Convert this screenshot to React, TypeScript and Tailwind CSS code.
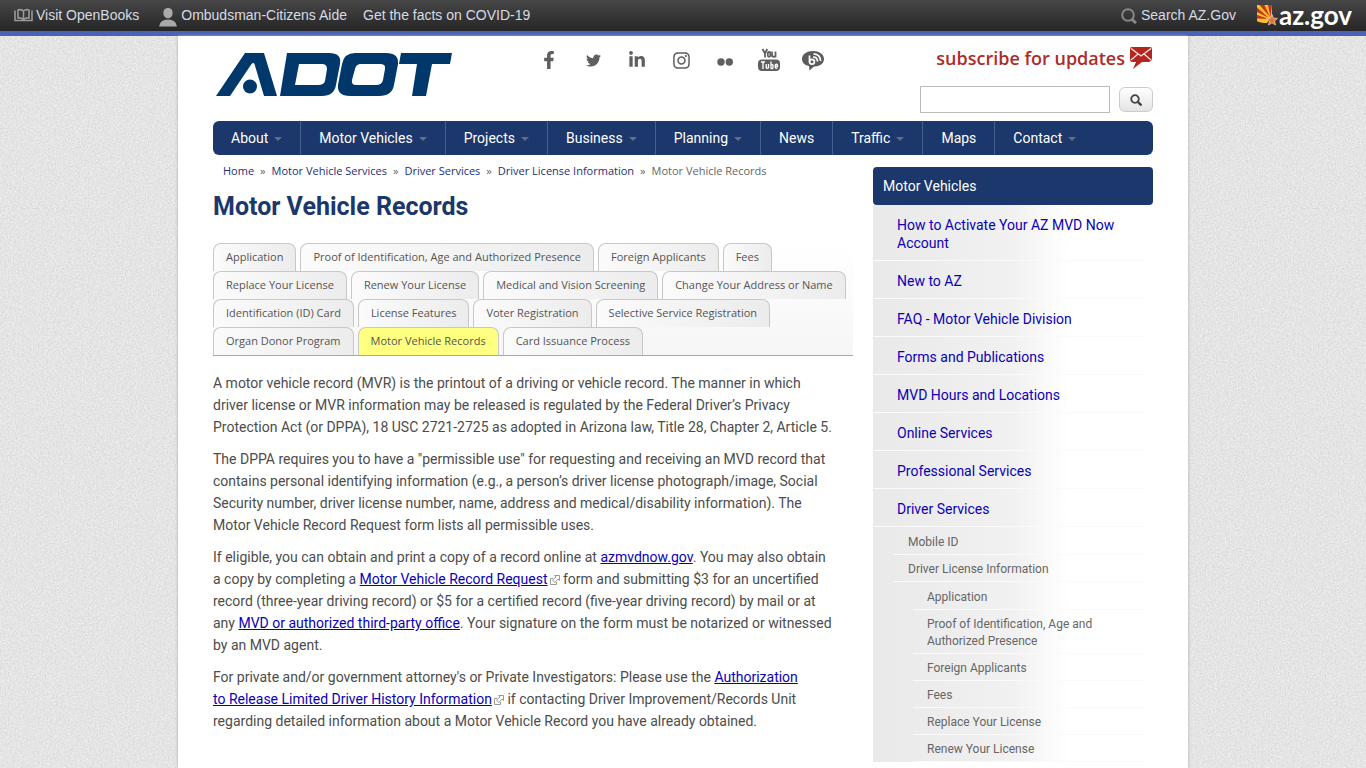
import type { ReactNode } from "react";
import { FaFacebookF, FaTwitter, FaLinkedinIn, FaInstagram } from "react-icons/fa";

const nav = [
    { label: "About", menu: true },
    { label: "Motor Vehicles", menu: true },
    { label: "Projects", menu: true },
    { label: "Business", menu: true },
    { label: "Planning", menu: true },
    { label: "News", menu: false },
    { label: "Traffic", menu: true },
    { label: "Maps", menu: false },
    { label: "Contact", menu: true },
];

const breadcrumbs = ["Home", "Motor Vehicle Services", "Driver Services", "Driver License Information"];

const tabRows = [
    ["Application", "Proof of Identification, Age and Authorized Presence", "Foreign Applicants", "Fees"],
    ["Replace Your License", "Renew Your License", "Medical and Vision Screening", "Change Your Address or Name"],
    ["Identification (ID) Card", "License Features", "Voter Registration", "Selective Service Registration"],
    ["Organ Donor Program", "Motor Vehicle Records", "Card Issuance Process"],
];

const sideLinks = [
    "How to Activate Your AZ MVD Now Account",
    "New to AZ",
    "FAQ - Motor Vehicle Division",
    "Forms and Publications",
    "MVD Hours and Locations",
    "Online Services",
    "Professional Services",
    "Driver Services",
];

const licenseLinks = [
    "Application",
    "Proof of Identification, Age and Authorized Presence",
    "Foreign Applicants",
    "Fees",
    "Replace Your License",
    "Renew Your License",
];

function PaperTexture() {
    return (
        <svg className="absolute inset-0 -z-10 h-full w-full" aria-hidden="true">
            <filter id="paper" colorInterpolationFilters="sRGB">
                <feTurbulence type="fractalNoise" baseFrequency="0.6" numOctaves="3" seed="4" />
                <feColorMatrix values="0.14 0 0 0 0.825  0.14 0 0 0 0.825  0.14 0 0 0 0.825  0 0 0 0 1" />
            </filter>
            <rect width="100%" height="100%" filter="url(#paper)" />
        </svg>
    );
}

function AzGovLogo() {
    return (
        <a href="#" className="flex items-center gap-px text-white" aria-label="az.gov">
            <svg viewBox="0 0 22 22" className="h-[22px] w-[22px]" aria-hidden="true">
                <path d="M1 1h15v10l-2 4-3 4Q4 19 1 17z" fill="#f8c02a" />
                <path d="M1 3.500V8l12 6zM3.500 1 14 13 8.500 1zM12 1l2.500 12L16 1zM1 11v3.500l12 .500z" fill="#c8321c" />
                <path
                    d="M16 10.500l1.500 3.600 4 .3-3 2.600 1 4-3.500-2.200L12.500 21l1-4-3-2.600 4-.3z"
                    fill="#e0763a"
                    stroke="#f3d9c8"
                    strokeWidth=".7"
                />
            </svg>
            <span className="font-['Lato'] text-[26px] leading-6 font-bold">az.gov</span>
        </a>
    );
}

function AdotLogo() {
    return (
        <svg viewBox="0 0 236 43" className="h-[43px] w-[236px]" role="img" aria-label="ADOT">
            <g fill="#00386b">
                <path d="M0 43 29 0h19l13 43H48L38.500 11q-1-2-3 0L14 43z" />
                <circle cx="34" cy="33.500" r="7" />
                <path
                    fillRule="evenodd"
                    d="M71 0h42q13 0 11 11l-4 21q-2 11-14 11H64zM83 11l-4 21h23q6 0 7-4l2-12q0-5-5-5z"
                />
                <path
                    fillRule="evenodd"
                    d="M139 0h31q13 0 12 11l-4 21q-2 11-15 11h-29q-13 0-12-11l4-21q2-11 13-11zM145 11q-5 0-6 5l-3 11q-1 5 4 5h20q6 0 7-5l2-11q1-5-5-5z"
                />
                <path d="M185 0h51l-2 11h-18l-6 32h-14l5-32h-18z" />
            </g>
        </svg>
    );
}

function YoutubeIcon() {
    return (
        <svg viewBox="0 0 24 24" className="h-6 w-6" aria-hidden="true">
            <g fill="none" stroke="#5f5f5f" strokeWidth="1.800">
                <path d="M5.500 1 8 5.500 10.200 1M8 5v4.500M18.500 3.500v6M15 3.500V8q1.500 1.500 3.500 0" />
                <rect x="10.800" y="4" width="2.500" height="4.800" rx="1.200" />
            </g>
            <rect x="1" y="11.500" width="22" height="11.500" rx="4" fill="#5f5f5f" />
            <g fill="none" stroke="#fff" strokeWidth="1.300">
                <path d="M4 14h4M6 14v7M9.200 16v3.800q1 1 2.300 0V16M14 13.500v7.300M14 17q2-1 2 .5v2q0 1.500-2 1M18.300 18.300h2.200V17q-1-1.500-2.200 0v2.500q1.200 1.500 2.200 0" />
            </g>
        </svg>
    );
}

function BlogIcon() {
    return (
        <svg viewBox="0 0 24 22" className="h-[22px] w-6" aria-hidden="true">
            <path d="M12 2c6 0 11 3 11 8s-5 7.500-10 7.500L8.500 21.500 8 17C3 16 1 13 1 10c0-5 5-8 11-8z" fill="#5c5c5c" />
            <g fill="none" stroke="#fff" strokeWidth="1.700">
                <circle cx="11" cy="12.800" r="2.400" />
                <path d="M8.500 6.500v6.800M12 8q4.500 0 4.500 4.500M12.500 4.800q7 .5 7 7.200" />
            </g>
        </svg>
    );
}

function MailBubble() {
    return (
        <svg viewBox="0 0 24 24" className="h-6 w-6" aria-hidden="true">
            <path d="M3 1h18q2 0 2 2v9q0 4-4 4h-6L4 23l3-7H3q-2 0-2-3V3q0-2 2-2z" fill="#b3261f" />
            <path d="M2 2.500l10 7.500 10-7.500M2 14l7-6M22 14l-7-6" fill="none" stroke="#fbe9e7" strokeWidth="1.200" />
        </svg>
    );
}

function ExternalIcon() {
    return (
        <svg viewBox="0 0 10 10" className="ml-0.5 inline h-2.5 w-2.5" fill="none" stroke="#999" aria-hidden="true">
            <path d="M3 3.500H.5v6h6V7" />
            <path d="M4.500.5h5v5L8 4 5 7.500 2.500 5 6 2z" />
        </svg>
    );
}

function TextLink({ children }: { children: ReactNode }) {
    return (
        <a href="#" className="text-[#0b00b8] underline">
            {children}
        </a>
    );
}

function StateBar() {
    return (
        <div className="flex h-9 items-center border-b-[5px] border-[#4a62b8] bg-linear-to-b from-[#474747] to-[#262626] px-3.5 pb-0.5 font-['Liberation_Sans'] text-sm text-[#d6dbe6]">
            <a href="#" className="flex items-center gap-[3px]">
                <svg viewBox="0 0 19 14" className="h-3.5 w-[19px]" fill="none" stroke="#999" strokeWidth="1.600" aria-hidden="true">
                    <path d="M1 2.500v10h17v-10M9.500 3v9M9.500 3Q6.500 1 4 2v8q3-.5 5.500 1.500Q12 9.500 15 10V2q-3-1-5.500 1" />
                </svg>
                Visit OpenBooks
            </a>
            <a href="#" className="ml-5 flex items-center gap-1">
                <svg viewBox="0 0 18 20" className="mt-1 h-5 w-[18px]" fill="#aaa" aria-hidden="true">
                    <ellipse cx="9" cy="6" rx="4.700" ry="5.300" />
                    <path d="M0 19.500q1-7 9-7t9 7z" />
                </svg>
                Ombudsman-Citizens Aide
            </a>
            <a href="#" className="ml-4">
                Get the facts on COVID-19
            </a>
            <a href="#" className="ml-auto flex items-center gap-1">
                <svg viewBox="0 0 16 16" className="mt-0.5 h-4 w-4" fill="none" stroke="#888" strokeWidth="2" aria-hidden="true">
                    <circle cx="7" cy="7" r="5.800" />
                    <path d="M10.500 11l4.500 4" strokeWidth="3" />
                </svg>
                Search AZ.Gov
            </a>
            <div className="ml-5">
                <AzGovLogo />
            </div>
        </div>
    );
}

function Header() {
    return (
        <header className="flex h-[85px] items-start justify-between">
            <a href="#" className="mt-[17px] ml-[3px]">
                <AdotLogo />
            </a>
            <div className="mt-3 flex items-center gap-5 pr-2.5 text-[#5f5f5f]">
                <a href="#" aria-label="Facebook" className="flex w-6 justify-center">
                    <FaFacebookF size={18} />
                </a>
                <a href="#" aria-label="Twitter" className="flex w-6 justify-center">
                    <FaTwitter size={15} />
                </a>
                <a href="#" aria-label="LinkedIn" className="flex w-6 justify-center">
                    <FaLinkedinIn size={18} />
                </a>
                <a href="#" aria-label="Instagram" className="flex w-6 justify-center">
                    <FaInstagram size={19} />
                </a>
                <a href="#" aria-label="Flickr" className="flex w-6 justify-center">
                    <svg viewBox="0 0 16 8" className="mt-1 h-2 w-4" fill="currentColor" aria-hidden="true">
                        <circle cx="4" cy="4" r="3.700" />
                        <circle cx="12.300" cy="4" r="3.700" />
                    </svg>
                </a>
                <a href="#" aria-label="YouTube">
                    <YoutubeIcon />
                </a>
                <a href="#" aria-label="Blog">
                    <BlogIcon />
                </a>
            </div>
            <div className="mt-2.5 flex flex-col items-end">
                <a href="#" className="flex items-center gap-1 font-['Open_Sans'] text-lg leading-6 font-semibold text-[#ad2c27]">
                    subscribe for updates
                    <MailBubble />
                </a>
                <form className="mt-4 flex items-center gap-[9px]">
                    <input type="text" aria-label="Search" className="h-[27px] w-[190px] border border-[#bbb] bg-white px-1" />
                    <button
                        type="button"
                        aria-label="Submit search"
                        className="flex h-[25px] w-[34px] items-center justify-center rounded-md border border-[#ccc] bg-linear-to-b from-white to-[#e4e4e4]">
                        <svg viewBox="0 0 12 12" className="h-3 w-3" fill="none" stroke="#444" strokeWidth="1.800" aria-hidden="true">
                            <circle cx="5" cy="5" r="3.800" />
                            <path d="M7.800 7.800l3.700 3.700" strokeWidth="2.400" />
                        </svg>
                    </button>
                </form>
            </div>
        </header>
    );
}

function MainNav() {
    return (
        <nav className="flex h-[34px] rounded-md bg-[#1b376c] text-sm text-white">
            {nav.map((item, i) => (
                <a
                    key={item.label}
                    href="#"
                    className={`flex items-center gap-1.5 px-[18px] ${i < nav.length - 1 ? "border-r border-[#47608f]" : ""}`}>
                    {item.label}
                    {item.menu && <span className="mt-0.5 border-x-4 border-t-4 border-x-transparent border-t-[#666d7d]" />}
                </a>
            ))}
        </nav>
    );
}

function Tabs() {
    return (
        <div className="mt-5 border-b border-[#a8a8a8] bg-linear-to-b from-white to-[#f6f6f6] font-['Open_Sans'] text-[11px] whitespace-nowrap text-[#555]">
            {tabRows.map((row) => (
                <div key={row[0]} className="flex gap-1">
                    {row.map((tab) => (
                        <a
                            key={tab}
                            href="#"
                            className={`h-7 rounded-t-lg border border-b-0 border-[#c8c8c8] px-3 leading-[26px] ${
                                tab === "Motor Vehicle Records" ? "bg-[#ffff80]" : "bg-linear-to-r from-[#fbfbfb] to-[#ececec]"
                            }`}>
                            {tab}
                        </a>
                    ))}
                </div>
            ))}
        </div>
    );
}

function Article() {
    return (
        <div className="mt-4 flex flex-col gap-2.5 text-sm leading-[22px] text-[#4c4c4c]">
            <p>
                A motor vehicle record (MVR) is the printout of a driving or vehicle record. The manner in which
                <br />
                driver license or MVR information may be released is regulated by the Federal Driver’s Privacy
                <br />
                Protection Act (or DPPA), 18 USC 2721-2725 as adopted in Arizona law, Title 28, Chapter 2, Article 5.
            </p>
            <p>
                The DPPA requires you to have a "permissible use" for requesting and receiving an MVD record that
                contains personal identifying information (e.g., a person’s driver license photograph/image, Social
                Security number, driver license number, name, address and medical/disability information). The
                <br />
                Motor Vehicle Record Request form lists all permissible uses.
            </p>
            <p>
                If eligible, you can obtain and print a copy of a record online at <TextLink>azmvdnow.gov</TextLink>. You
                may also obtain
                <br />a copy by completing a <TextLink>Motor Vehicle Record Request</TextLink>
                <ExternalIcon /> form and submitting $3 for an uncertified
                <br />
                record (three-year driving record) or $5 for a certified record (five-year driving record) by mail or at
                <br />
                any <TextLink>MVD or authorized third-party office</TextLink>. Your signature on the form must be
                notarized or witnessed
                <br />
                by an MVD agent.
            </p>
            <p>
                For private and/or government attorney's or Private Investigators: Please use the{" "}
                <TextLink>
                    Authorization
                    <br />
                    to Release Limited Driver History Information
                </TextLink>
                <ExternalIcon /> if contacting Driver Improvement/Records Unit
                <br />
                regarding detailed information about a Motor Vehicle Record you have already obtained.
            </p>
        </div>
    );
}

function Sidebar() {
    return (
        <aside className="mt-3 w-[280px] shrink-0">
            <h2 className="rounded bg-[#1b376c] px-2.5 text-sm leading-[38px] text-white">Motor Vehicles</h2>
            <div className="bg-linear-to-r from-[#e9e9e9] via-[#f1f1f1] via-50% to-white to-70% pr-2">
                <ul className="text-sm leading-[18px] text-[#0b00b8]">
                    {sideLinks.map((link) => (
                        <li key={link} className="border-b border-[#fafafa] pt-[11px] pr-4 pb-2 pl-6">
                            <a href="#">{link}</a>
                        </li>
                    ))}
                </ul>
                <ul className="ml-5 pt-px text-xs leading-[17px] text-[#666]">
                    <li className="border-b border-[#fafafa] pt-1.5 pb-[3px] pl-[15px]">
                        <a href="#">Mobile ID</a>
                    </li>
                    <li className="border-b border-[#fafafa] pt-1.5 pb-[3px] pl-[15px]">
                        <a href="#">Driver License Information</a>
                    </li>
                    <li className="pt-px pl-5">
                        <ul>
                            {licenseLinks.map((link) => (
                                <li key={link} className="border-b border-[#fafafa] pt-1.5 pr-6 pb-[3px] pl-3.5">
                                    <a href="#">{link}</a>
                                </li>
                            ))}
                        </ul>
                    </li>
                </ul>
            </div>
        </aside>
    );
}

function App() {
    return (
        <div className="relative isolate flex h-screen flex-col overflow-hidden font-['Roboto',sans-serif]">
            <PaperTexture />
            <StateBar />
            <div className="mx-auto w-full max-w-[1010px] flex-1 bg-white px-[35px] shadow-[0_0_3px_#aaa]">
                <Header />
                <MainNav />
                <div className="flex gap-5">
                    <main className="min-w-0 flex-1">
                        <nav
                            className="mt-2 flex gap-1.5 px-2.5 font-['Open_Sans'] text-[11px] leading-4 text-[#666]"
                            aria-label="Breadcrumb">
                            {breadcrumbs.map((crumb) => (
                                <span key={crumb} className="flex gap-1.5">
                                    <a href="#" className="text-[#1b2f78]">
                                        {crumb}
                                    </a>
                                    <span>»</span>
                                </span>
                            ))}
                            <span>Motor Vehicle Records</span>
                        </nav>
                        <h1 className="mt-3 text-[25px] leading-8 font-bold text-[#1b376c]">Motor Vehicle Records</h1>
                        <Tabs />
                        <Article />
                    </main>
                    <Sidebar />
                </div>
            </div>
        </div>
    );
}

export default App;
